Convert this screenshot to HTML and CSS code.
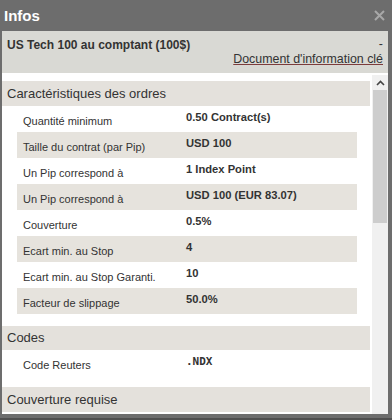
FILE: index.html
```html
<!DOCTYPE html>
<html lang="fr">
<head>
    <meta charset="UTF-8">
    <title>Infos</title>
    <link rel="stylesheet" href="styles.css">
</head>
<body>

<div class="window">
    <div class="titlebar">
        <span class="title">Infos</span>
        <svg class="close" width="11" height="11" viewBox="0 0 11 11"><path d="M1 1 L10 10 M10 1 L1 10" stroke="#a8a8a8" stroke-width="2"/></svg>
    </div>

    <div class="panel">
        <div class="instrument">
            <div class="instrument-name">US Tech 100 au comptant (100$)</div>
            <div class="instrument-links">
                <span class="dash">-</span>
                <a class="doc-link">Document d'information clé</a>
            </div>
        </div>

        <div class="body">
            <div class="content">
                <div class="section-title">Caractéristiques des ordres</div>
                <div class="rows">
                    <div class="row"><span class="label">Quantité minimum</span><span class="value">0.50 Contract(s)</span></div>
                    <div class="row"><span class="label">Taille du contrat (par Pip)</span><span class="value">USD 100</span></div>
                    <div class="row"><span class="label">Un Pip correspond à</span><span class="value">1 Index Point</span></div>
                    <div class="row"><span class="label">Un Pip correspond à</span><span class="value">USD 100 (EUR 83.07)</span></div>
                    <div class="row"><span class="label">Couverture</span><span class="value">0.5%</span></div>
                    <div class="row"><span class="label">Ecart min. au Stop</span><span class="value">4</span></div>
                    <div class="row"><span class="label">Ecart min. au Stop Garanti.</span><span class="value">10</span></div>
                    <div class="row"><span class="label">Facteur de slippage</span><span class="value">50.0%</span></div>
                </div>

                <div class="section-title small">Codes</div>
                <div class="rows short">
                    <div class="row"><span class="label">Code Reuters</span><span class="value mono">.NDX</span></div>
                </div>

                <div class="section-title">Couverture requise</div>
            </div>

            <div class="scrollbar">
                <div class="scroll-up">
                    <svg width="9" height="6" viewBox="0 0 9 6"><path d="M1 5 L4.5 1.5 L8 5" fill="none" stroke="#444" stroke-width="1.6"/></svg>
                </div>
                <div class="scroll-thumb"></div>
            </div>
        </div>
    </div>
</div>

</body>
</html>
```

FILE: styles.css
```css
body {
    margin: 0;
    padding: 0;
    background-color: #6d6d6d;
    font-family: "Liberation Sans", Arial, sans-serif;
    color: #333;
}
.window {
    width: 392px;
    height: 420px;
    display: flex;
    flex-direction: column;
    padding-bottom: 4px;
    box-sizing: border-box;
    background-color: #6d6d6d;
    border-bottom: 2px solid #4f4f4f;
}
.titlebar {
    height: 31px;
    display: flex;
    align-items: center;
    justify-content: space-between;
    padding: 0 7px 0 4px;
}
.title {
    color: #fff;
    font-size: 15px;
    font-weight: bold;
}
.panel {
    flex: 1;
    margin: 0 4px 0 2px;
    background-color: #fff;
    display: flex;
    flex-direction: column;
    overflow: hidden;
}
.instrument {
    height: 42px;
    background-color: #d9d9d4;
    display: flex;
    justify-content: space-between;
    padding: 0 5px 0 5px;
}
.instrument-name {
    font-size: 12px;
    font-weight: bold;
    padding-top: 7px;
}
.instrument-links {
    display: flex;
    flex-direction: column;
    align-items: flex-end;
    font-size: 12.4px;
    padding-top: 9px;
}
.dash {
    line-height: 8px;
}
.doc-link {
    color: #333;
    text-decoration: underline;
    text-decoration-color: #7c3c3c;
    margin-top: 4px;
}
.body {
    flex: 1;
    display: flex;
    overflow: hidden;
}
.content {
    flex: 1;
    padding-top: 8px;
    margin-right: 2px;
}
.section-title {
    height: 25px;
    line-height: 25px;
    background-color: #e4e1dc;
    font-size: 13px;
    padding-left: 5px;
}
.section-title.small {
    height: 24px;
    line-height: 24px;
}
.rows {
    margin: 0 13px 12px 15px;
}
.rows.short {
    margin-bottom: 11px;
}
.row {
    height: 26px;
    display: flex;
    font-size: 11px;
}
.row:nth-child(even) {
    background-color: #e6e3dd;
}
.label {
    width: 163px;
    padding-left: 6px;
    padding-top: 9px;
}
.value {
    font-weight: bold;
    font-size: 11.2px;
    padding-top: 5px;
}
.mono {
    font-family: "DejaVu Sans Mono", monospace;
    font-size: 11px;
}
.scrollbar {
    width: 16px;
    margin-top: 2px;
    background-color: #f0f0f0;
    display: flex;
    flex-direction: column;
}
.scroll-up {
    height: 15px;
    display: flex;
    align-items: center;
    justify-content: center;
}
.scroll-thumb {
    height: 133px;
    margin: 0 1px;
    background-color: #cdcdcd;
}
```
